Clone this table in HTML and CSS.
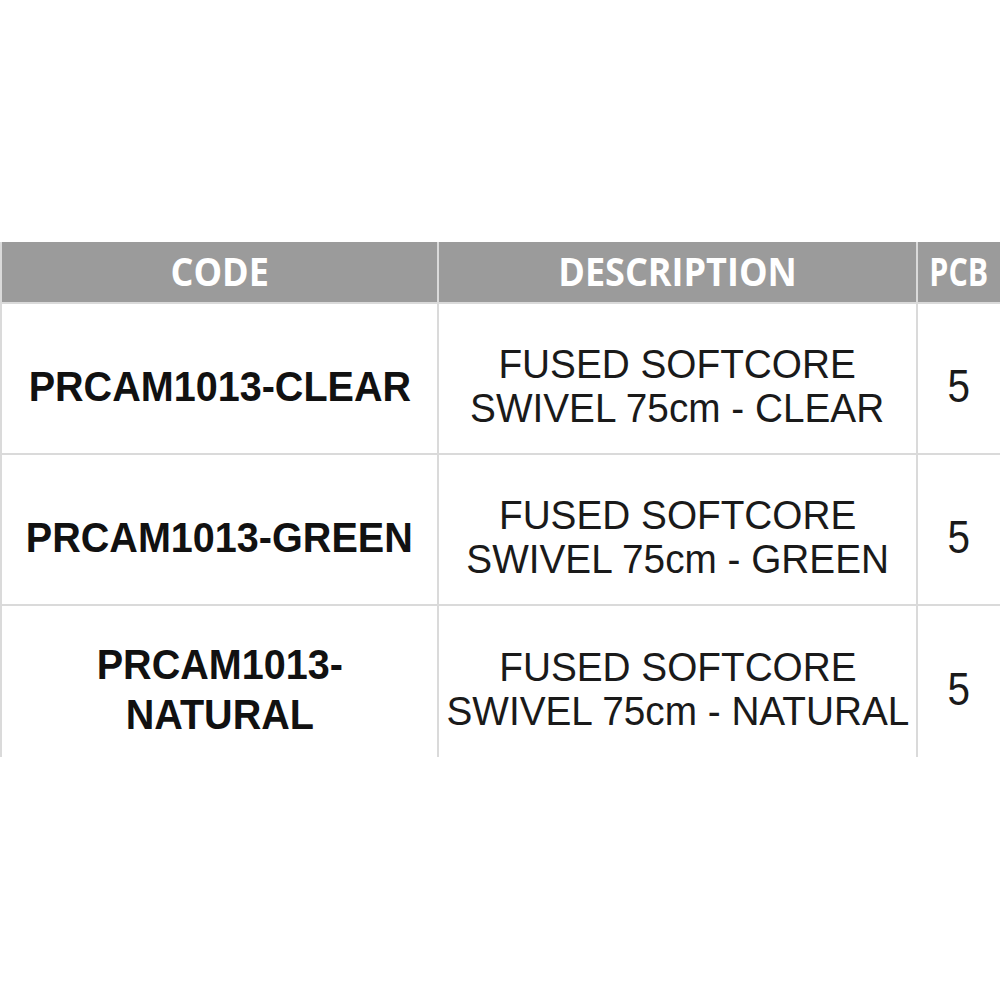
FILE: index.html
```html
<!DOCTYPE html>
<html>
<head>
<meta charset="utf-8">
<link rel="stylesheet" href="styles.css">
</head>
<body>
<div class="table">
  <div class="th"><span class="sq hd-code">CODE</span></div>
  <div class="th"><span class="sq hd-desc">DESCRIPTION</span></div>
  <div class="th"><span class="sq hd-pcb">PCB</span></div>

  <div class="td code"><span class="sq">PRCAM1013-CLEAR</span></div>
  <div class="td desc"><span class="sq">FUSED SOFTCORE<br>SWIVEL 75cm - CLEAR</span></div>
  <div class="td pcb"><span class="sq">5</span></div>

  <div class="td code"><span class="sq">PRCAM1013-GREEN</span></div>
  <div class="td desc"><span class="sq">FUSED SOFTCORE<br>SWIVEL 75cm - GREEN</span></div>
  <div class="td pcb"><span class="sq">5</span></div>

  <div class="td code"><span class="sq">PRCAM1013-<br>NATURAL</span></div>
  <div class="td desc"><span class="sq">FUSED SOFTCORE<br>SWIVEL 75cm - NATURAL</span></div>
  <div class="td pcb"><span class="sq">5</span></div>
</div>
</body>
</html>
```

FILE: styles.css
```css
html, body {
  margin: 0;
  padding: 0;
  background: #ffffff;
}

.table {
  margin-top: 242px;
  width: 1000px;
  display: grid;
  grid-template-columns: 435px 477px 1fr;
  grid-template-rows: 60px 149px 149px 151px;
  gap: 2px;
  padding-left: 2px;
  box-sizing: border-box;
  background: #dadada;
}

.th {
  background: #9b9b9b;
  color: #ffffff;
  font-family: "Open Sans", "Liberation Sans", sans-serif;
  font-weight: 700;
  font-size: 40px;
  line-height: 1;
  display: flex;
  align-items: center;
  justify-content: center;
  padding-bottom: 2px;
  box-sizing: border-box;
  overflow: hidden;
}

.sq {
  display: inline-block;
  transform: scaleX(0.92);
  text-align: center;
  white-space: nowrap;
}

.hd-code { transform: scaleX(0.9); }
.hd-desc { transform: scaleX(0.9); }
.hd-pcb { transform: scaleX(0.76); }

.td {
  background: #ffffff;
  color: #111111;
  font-family: "Liberation Sans", Arial, sans-serif;
  display: flex;
  align-items: center;
  justify-content: center;
  padding-top: 14px;
  box-sizing: border-box;
  overflow: hidden;
}

.code {
  font-weight: 700;
  font-size: 43px;
  line-height: 50px;
}

.desc {
  font-size: 41px;
  line-height: 44px;
  color: #1a1a1a;
}

.desc .sq {
  transform: scaleX(0.945);
}

.pcb {
  font-size: 46px;
  line-height: 1;
  color: #1a1a1a;
}

.pcb .sq {
  transform: scaleX(0.88);
}
```
